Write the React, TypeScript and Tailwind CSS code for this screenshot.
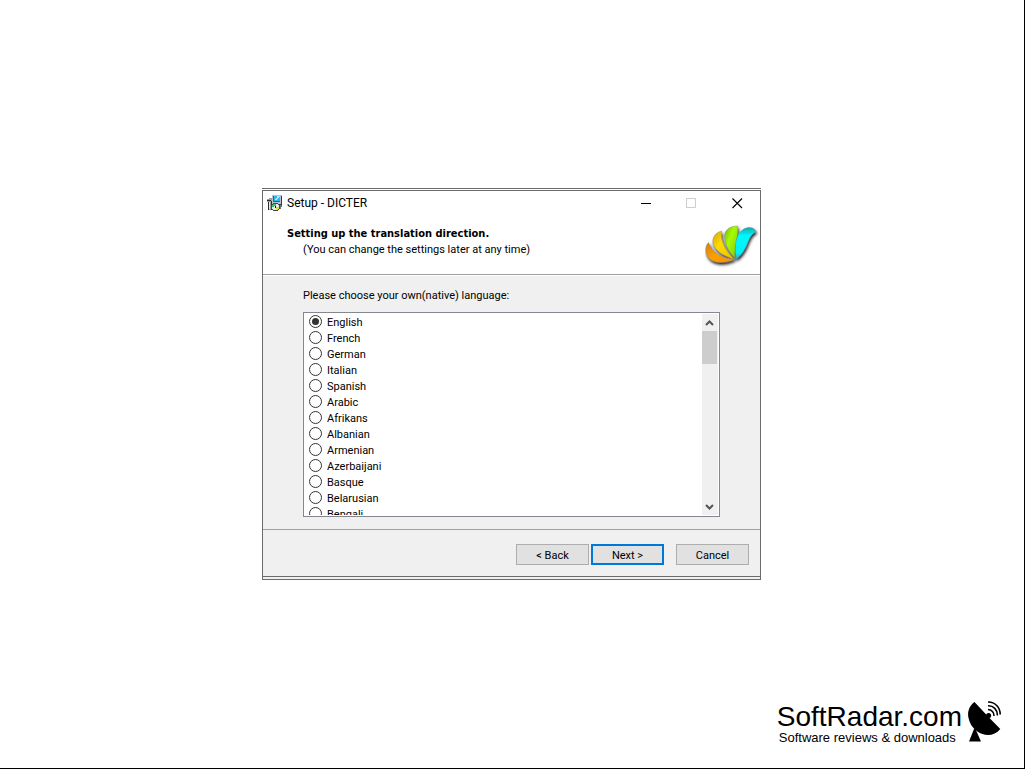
import { useState } from 'react';
import { clsx } from 'clsx';

const languages = [
  'English',
  'French',
  'German',
  'Italian',
  'Spanish',
  'Arabic',
  'Afrikans',
  'Albanian',
  'Armenian',
  'Azerbaijani',
  'Basque',
  'Belarusian',
  'Bengali',
];

function SetupIcon() {
  return (
    <svg viewBox="0 0 16 16" className="h-4 w-4" shapeRendering="crispEdges" aria-hidden="true">
      <path d="M5 0h10v9H5z" fill="#b8c4cc" />
      <path d="M14 1h1v9h-1zM6 9h9v1H6z" fill="#33383c" />
      <path d="M6 1h7v6H6z" fill="#1468b8" />
      <path d="M7 1h6v5H7z" fill="#35b4f4" />
      <path d="M10 1h3v1h-1v1h-1v1h-1v1H8V4h1V3h1z" fill="#a8ecff" />
      <path d="M0 4h2V3h3v12H1V7H0z" fill="#a0a098" />
      <path d="M0 5h4v1H0zM1 7h1v8H1zM4 6h1v9H4z" fill="#2c2c2c" />
      <path d="M2 7h1v7H2z" fill="#e8e8e0" />
      <path d="M6 8h5v1h1v1h1v4h-1v1h-1v1H6v-1H5v-1H4v-4h1V9h1z" fill="#3b4a44" />
      <path d="M6 9h5v1h1v4h-1v1H6v-1H5v-4h1z" fill="#e4f0e4" />
      <path d="M6 9h3v2H7v1H5v-2h1z" fill="#28c868" />
      <path d="M9 12h3v2h-1v1H9z" fill="#e4dc30" />
      <path d="M8 11h1v2H8z" fill="#111" />
      <path d="M13 10h2v2h-1v2h-1z" fill="#6c7074" />
    </svg>
  );
}

function DicterLogo() {
  return (
    <svg viewBox="0 0 54 44" className="h-11 w-[54px]" aria-hidden="true">
      <defs>
        <filter id="petalShadow" x="-20%" y="-20%" width="140%" height="150%">
          <feDropShadow dx="1" dy="2" stdDeviation="1.5" floodColor="#000" floodOpacity="0.9" />
        </filter>
        <linearGradient id="orange" x1="0" y1="0" x2="1" y2="1">
          <stop offset="0" stopColor="#d87c10" />
          <stop offset="0.5" stopColor="#ffa000" />
          <stop offset="1" stopColor="#f08c10" />
        </linearGradient>
        <linearGradient id="yellow" x1="0" y1="0" x2="1" y2="1">
          <stop offset="0" stopColor="#d0a410" />
          <stop offset="0.4" stopColor="#ffdc00" />
          <stop offset="1" stopColor="#e8bc08" />
        </linearGradient>
        <linearGradient id="green" x1="0" y1="0" x2="1" y2="1">
          <stop offset="0" stopColor="#70b010" />
          <stop offset="0.4" stopColor="#a8fc00" />
          <stop offset="1" stopColor="#78c810" />
        </linearGradient>
        <linearGradient id="cyan" x1="0" y1="0" x2="0" y2="1">
          <stop offset="0" stopColor="#10a8b0" />
          <stop offset="0.25" stopColor="#00f8fc" />
          <stop offset="0.8" stopColor="#00f0f8" />
          <stop offset="1" stopColor="#40a8b0" />
        </linearGradient>
      </defs>
      <g filter="url(#petalShadow)" stroke="#777" strokeOpacity="0.6" strokeWidth="0.6">
        <path d="M3.500 17.500C0 21 0 28 3 32c5 7 18 7 27 2C17 34 7 28 3.500 17.500z" fill="url(#orange)" />
        <path d="M16.500 6C9 8 6 15 9 21c4 7 12 11 20 13C22 27 15 17 16.500 6z" fill="url(#yellow)" />
        <path d="M32.500 1C23 1 18 7 20 14c1 8 5 14 10 19-1-12 4-21 2.500-32z" fill="url(#green)" />
        <path d="M31 34C29 20 31 9 38 4.500 43 1.500 49 2 51 6.500 46.500 9 44.500 13 42.500 18 40 25 36 31 31 34z" fill="url(#cyan)" />
      </g>
    </svg>
  );
}

function DishIcon() {
  return (
    <svg viewBox="0 0 34 42" className="h-[42px] w-[34px]" aria-hidden="true">
      <path d="M6.500 1C1 5-.5 11 .3 16c1 6 4 11 9 14.500 7 5 17 5 23-2.500L21.500 17a2.600 2.600 0 1 0-3.300-3.500z" fill="#000" />
      <path d="M6 28h1.500L13 40.500H1z" fill="#000" />
      <g fill="none" stroke="#000" strokeWidth="1.600">
        <path d="M20 8.500a6 6 0 0 1 6 6.500" />
        <path d="M20 4.700c5.500-.2 9.500 4 9.500 9.800" />
        <path d="M20 1c7-.2 12.200 5.500 12.200 12.500" />
      </g>
    </svg>
  );
}

function Chevron({ down = false }: { down?: boolean }) {
  return (
    <svg viewBox="0 0 9 6" className={clsx('h-1.5 w-[9px]', down && 'rotate-180')} aria-hidden="true">
      <path d="M1 5l3.500-3.500L8 5" fill="none" stroke="#555" strokeWidth="2" />
    </svg>
  );
}

function TitleBar() {
  return (
    <div className="flex h-6 items-center justify-between pl-1">
      <div className="flex items-center gap-1 text-xs">
        <SetupIcon />
        <span>Setup - DICTER</span>
      </div>
      <div className="flex">
        <button type="button" aria-label="Minimize" className="flex h-6 w-[45px] items-center justify-center">
          <svg viewBox="0 0 11 11" className="h-[11px] w-[11px]">
            <path d="M0 5.500h10" stroke="#000" />
          </svg>
        </button>
        <button type="button" aria-label="Maximize" disabled className="flex h-6 w-[45px] items-center justify-center">
          <svg viewBox="0 0 11 11" className="h-[11px] w-[11px]">
            <path d="M.5 .5h9v9h-9z" fill="none" stroke="#ccc" />
          </svg>
        </button>
        <button type="button" aria-label="Close" className="flex h-6 w-[46px] items-center justify-center">
          <svg viewBox="0 0 11 11" className="h-[11px] w-[11px]">
            <path d="M.5 .5l9.500 9.500M10 .5L.5 10" stroke="#000" strokeWidth="1.100" />
          </svg>
        </button>
      </div>
    </div>
  );
}

function LanguageList() {
  const [selected, setSelected] = useState('English');

  return (
    <div className="flex h-[205px] border border-[#828790] bg-white p-px">
      <div role="radiogroup" aria-labelledby="language-label" className="flex-1 overflow-hidden">
        {languages.map((lang) => (
          <label key={lang} className="flex h-4 items-start gap-[5px] pt-px pl-1">
            <input
              type="radio"
              name="language"
              value={lang}
              checked={selected === lang}
              onChange={() => setSelected(lang)}
              className="h-[13px] w-[13px] shrink-0 appearance-none rounded-full border border-[#333] bg-white bg-clip-content p-0.5 checked:bg-[#333]"
            />
            {lang}
          </label>
        ))}
      </div>
      {/* Scrollbar */}
      <div className="flex w-4 flex-col bg-[#f0f0f0]">
        <button type="button" aria-label="Scroll up" className="flex h-[17px] items-center justify-center pr-px">
          <Chevron />
        </button>
        <div className="flex-1">
          <div className="h-[33px] w-[15px] bg-[#cdcdcd]" />
        </div>
        <button type="button" aria-label="Scroll down" className="flex h-[17px] items-center justify-center pr-px">
          <Chevron down />
        </button>
      </div>
    </div>
  );
}

function DialogButton({ label, primary = false }: { label: string; primary?: boolean }) {
  return (
    <button
      type="button"
      className={clsx(
        'flex h-[21px] w-[73px] items-center justify-center bg-[#e1e1e1] pt-0.5',
        primary ? 'border-2 border-[#0078d7]' : 'border border-[#adadad]'
      )}
    >
      {label}
    </button>
  );
}

function SetupDialog() {
  return (
    <section className="w-[499px] border-y border-[#6b6b6b] pt-px font-[Roboto,sans-serif] text-[11px] leading-4 text-black">
      <div className="border border-[#6b6b6b] bg-white">
        <TitleBar />

        {/* Header */}
        <header className="flex h-[60px] justify-between border-b border-[#a0a0a0] pl-6">
          <div className="pt-[11px]">
            <h1 className="font-['DejaVu_Sans_Condensed','DejaVu_Sans',sans-serif] font-bold">
              Setting up the translation direction.
            </h1>
            <p className="pl-4">(You can change the settings later at any time)</p>
          </div>
          <div className="pt-2.5 pr-px">
            <DicterLogo />
          </div>
        </header>

        {/* Language choice */}
        <div className="mt-px bg-[#f0f0f0] px-10 pt-3 pb-3">
          <p id="language-label" className="mb-2">
            Please choose your own(native) language:
          </p>
          <LanguageList />
        </div>

        {/* Buttons */}
        <footer className="flex justify-end border-t border-[#a0a0a0] bg-[#f0f0f0] pt-3.5 pr-[11px] pb-[11px]">
          <div className="mr-3 flex gap-0.5">
            <DialogButton label="< Back" />
            <DialogButton label="Next >" primary />
          </div>
          <DialogButton label="Cancel" />
        </footer>
      </div>
      <div className="h-0.5 border-x border-[#6b6b6b] bg-[#f0f0f0]" />
    </section>
  );
}

export default function App() {
  return (
    <main className="grid min-h-screen grid-rows-[1fr_auto_1fr] justify-items-center border-r border-b border-black bg-white">
      <div className="row-start-2 pr-px">
        <SetupDialog />
      </div>

      <div className="row-start-3 flex items-end gap-1.5 self-end justify-self-end pr-[22px] pb-[23px] font-['Liberation_Sans',Arial,sans-serif] text-black">
        <div>
          <p className="text-[28px] leading-7">SoftRadar.com</p>
          <p className="pl-0.5 text-[13px] leading-3.5">Software reviews &amp; downloads</p>
        </div>
        <div className="pb-0.5">
          <DishIcon />
        </div>
      </div>
    </main>
  );
}
